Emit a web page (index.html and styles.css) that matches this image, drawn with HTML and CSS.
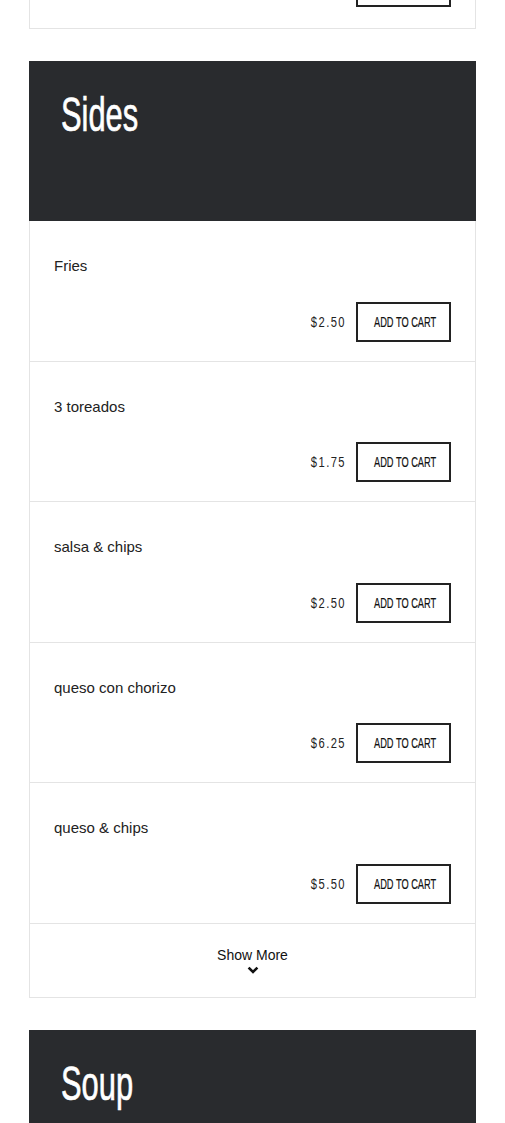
FILE: index.html
```html
<!DOCTYPE html>
<html lang="en">
<head>
    <meta charset="UTF-8">
    <meta name="viewport" content="width=device-width, initial-scale=1.0">
    <title>Menu</title>
    <link rel="stylesheet" href="styles.css">
</head>
<body>
    <main class="menu">
        <section class="card card-prev">
            <div class="item-actions">
                <button class="cart-btn"><span>Add to cart</span></button>
            </div>
        </section>

        <section class="category">
            <header class="category-head">
                <h2>Sides</h2>
            </header>
            <div class="card">
                <div class="item">
                    <p class="item-name">Fries</p>
                    <div class="item-actions">
                        <span class="price">$2.50</span>
                        <button class="cart-btn"><span>Add to cart</span></button>
                    </div>
                </div>
                <div class="item">
                    <p class="item-name">3 toreados</p>
                    <div class="item-actions">
                        <span class="price">$1.75</span>
                        <button class="cart-btn"><span>Add to cart</span></button>
                    </div>
                </div>
                <div class="item">
                    <p class="item-name">salsa &amp; chips</p>
                    <div class="item-actions">
                        <span class="price">$2.50</span>
                        <button class="cart-btn"><span>Add to cart</span></button>
                    </div>
                </div>
                <div class="item">
                    <p class="item-name">queso con chorizo</p>
                    <div class="item-actions">
                        <span class="price">$6.25</span>
                        <button class="cart-btn"><span>Add to cart</span></button>
                    </div>
                </div>
                <div class="item">
                    <p class="item-name">queso &amp; chips</p>
                    <div class="item-actions">
                        <span class="price">$5.50</span>
                        <button class="cart-btn"><span>Add to cart</span></button>
                    </div>
                </div>
                <a href="#" class="show-more">
                    Show More
                    <svg width="12" height="8" viewBox="0 0 12 8"><path d="M1.6 1.6 L6 6 L10.4 1.6" fill="none" stroke="#111" stroke-width="2.6"/></svg>
                </a>
            </div>
        </section>

        <section class="category">
            <header class="category-head">
                <h2>Soup</h2>
            </header>
        </section>
    </main>
</body>
</html>
```

FILE: styles.css
```css
body {
    margin: 0;
    padding: 0;
    background: #fff;
    font-family: "Liberation Sans", Arial, sans-serif;
    color: #222;
}

.menu {
    width: 447px;
    margin-left: 29px;
}

.card {
    border: 1px solid #e4e4e4;
    border-top: none;
    background: #fff;
}

/* tail of the previous category, cut by the top of the window */
.card-prev {
    height: 29px;
    box-sizing: border-box;
    overflow: hidden;
    display: flex;
    flex-direction: column;
    justify-content: flex-end;
    padding: 0 24px 21px;
}

.category {
    margin-top: 32px;
}

.category-head {
    background: #292b2e;
    height: 160px;
    padding: 25px 32px 0;
    box-sizing: border-box;
    overflow: hidden;
}

.category-head h2 {
    display: inline-block;
    margin: 0;
    color: #fff;
    font-weight: normal;
    font-size: 49px;
    line-height: 56px;
    -webkit-text-stroke: 0.7px #fff;
    transform: scaleX(0.63);
    transform-origin: left center;
}

.item {
    padding: 36px 24px 19px;
    border-bottom: 1px solid #e4e4e4;
}

.item-name {
    margin: 0 0 26.5px;
    font-size: 15px;
    line-height: 18px;
    color: #222;
}

.item-actions {
    display: flex;
    justify-content: flex-end;
    align-items: center;
    gap: 10px;
}

.price {
    display: inline-block;
    font-size: 14px;
    letter-spacing: 1.8px;
    color: #222;
    transform: scaleX(0.8);
    transform-origin: right center;
}

.cart-btn {
    flex: none;
    width: 95px;
    height: 40px;
    border: 2px solid #222;
    background: #fff;
    color: #111;
    font-family: "Liberation Sans", Arial, sans-serif;
    font-size: 14px;
    text-transform: uppercase;
    padding: 0;
    cursor: pointer;
    white-space: nowrap;
}

.cart-btn span {
    display: inline-block;
    -webkit-text-stroke: 0.2px #111;
    transform: scaleX(0.66);
}

.show-more {
    display: flex;
    flex-direction: column;
    align-items: center;
    height: 73px;
    padding-top: 23px;
    box-sizing: border-box;
    font-size: 14px;
    line-height: 16px;
    color: #111;
    text-decoration: none;
}

.show-more svg {
    margin-top: 3px;
}
```
